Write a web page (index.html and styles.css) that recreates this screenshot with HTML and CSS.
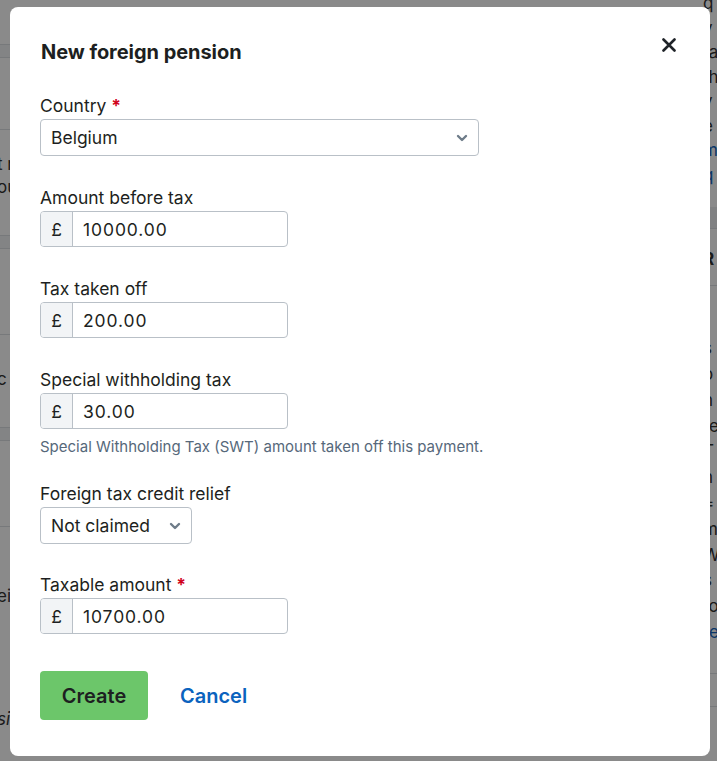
FILE: index.html
```html
<!DOCTYPE html>
<html lang="en">
<head>
<meta charset="utf-8">
<title>New foreign pension</title>
<link rel="stylesheet" href="styles.css">
</head>
<body>
<div class="page">
  <div class="side side-left">
    <div class="bg-row band"></div>
    <div class="bg-row tall1 line"></div>
    <div class="bg-text first">t r</div>
    <div class="bg-text">ou</div>
    <div class="bg-row band gap"></div>
    <div class="bg-row tall line"></div>
    <div class="bg-text spaced">c</div>
    <div class="bg-row band gap"></div>
    <div class="bg-row tall line"></div>
    <div class="bg-text spaced2">eig</div>
    <div class="bg-text spaced3 italic">si</div>
  </div>
  <div class="middle"></div>
  <div class="side side-right">
    <div class="bg-text r top">q</div>
    <div class="bg-text r">y</div>
    <div class="bg-text r">ta</div>
    <div class="bg-text r">th</div>
    <div class="bg-text r">y</div>
    <div class="bg-text r">e</div>
    <div class="bg-text r link">m</div>
    <div class="bg-text r link">q</div>
    <div class="bg-row band2"></div>
    <div class="bg-text r bold">R</div>
    <div class="bg-row line thin1"></div>
    <div class="bg-text r2 firstp">f</div>
    <div class="bg-text r2">s</div>
    <div class="bg-text r2">o</div>
    <div class="bg-text r2">n</div>
    <div class="bg-text r2">re</div>
    <div class="bg-text r2">T</div>
    <div class="bg-text r2">n</div>
    <div class="bg-text r2">=</div>
    <div class="bg-text r2">m</div>
    <div class="bg-text r2">W</div>
    <div class="bg-text r2">s</div>
    <div class="bg-text r2">to</div>
    <div class="bg-text r2 link">re</div>
    <div class="bg-row line thin2"></div>
    <div class="bg-row line thin3"></div>
  </div>
</div>
<div class="overlay"></div>

<div class="modal" role="dialog" aria-labelledby="modal-title">
  <div class="modal-header">
    <h2 id="modal-title" class="modal-title">New foreign pension</h2>
    <button class="close" type="button" aria-label="Close">
      <svg width="14" height="14" viewBox="0 0 14 14"><path d="M1.5 1.5 L12.5 12.5 M12.5 1.5 L1.5 12.5" stroke="#1f2328" stroke-width="2.6" stroke-linecap="round"/></svg>
    </button>
  </div>

  <form class="form">
    <div class="field">
      <label class="label">Country <span class="req">*</span></label>
      <div class="select select-wide">
        <span>Belgium</span>
        <svg class="chev" width="12" height="8" viewBox="0 0 12 8"><path d="M2 2 L6 6 L10 2" fill="none" stroke="#6e7c89" stroke-width="2.4" stroke-linecap="round" stroke-linejoin="round"/></svg>
      </div>
    </div>

    <div class="field">
      <label class="label">Amount before tax</label>
      <div class="input-group">
        <span class="addon">£</span>
        <span class="input">10000.00</span>
      </div>
    </div>

    <div class="field">
      <label class="label">Tax taken off</label>
      <div class="input-group">
        <span class="addon">£</span>
        <span class="input">200.00</span>
      </div>
    </div>

    <div class="field field-help">
      <label class="label">Special withholding tax</label>
      <div class="input-group">
        <span class="addon">£</span>
        <span class="input">30.00</span>
      </div>
      <p class="help">Special Withholding Tax (SWT) amount taken off this payment.</p>
    </div>

    <div class="field field-select">
      <label class="label">Foreign tax credit relief</label>
      <div class="select select-narrow">
        <span>Not claimed</span>
        <svg class="chev" width="12" height="8" viewBox="0 0 12 8"><path d="M2 2 L6 6 L10 2" fill="none" stroke="#6e7c89" stroke-width="2.4" stroke-linecap="round" stroke-linejoin="round"/></svg>
      </div>
    </div>

    <div class="field">
      <label class="label">Taxable amount <span class="req">*</span></label>
      <div class="input-group">
        <span class="addon">£</span>
        <span class="input">10700.00</span>
      </div>
    </div>

    <div class="actions">
      <button class="btn-create" type="button">Create</button>
      <a class="btn-cancel" href="#">Cancel</a>
    </div>
  </form>
</div>
</body>
</html>
```

FILE: styles.css
```css
* { box-sizing: border-box; }

html, body {
  margin: 0;
  height: 100%;
}

body {
  font-family: Inter, "Noto Sans", "Liberation Sans", sans-serif;
  color: #1d1f21;
  background: #ffffff;
  overflow: hidden;
}

/* background page (dimmed behind the dialog) */
.page {
  display: grid;
  grid-template-columns: 40px 1fr 8px;
  height: 761px;
  overflow: hidden;
}

.side {
  display: flex;
  flex-direction: column;
  overflow: hidden;
  font-size: 17px;
  color: #333;
}

.side-left { padding-top: 44px; }
.side-right { margin-left: -6px; }

.bg-row.band { height: 14px; flex: none; background: #f3f4f6; border-top: 1px solid #dcdfe3; border-bottom: 1px solid #dcdfe3; }
.bg-row.band2 { height: 22px; flex: none; background: #eceef1; border-bottom: 1px solid #dcdfe3; margin-top: 20px; }
.bg-row.tall1 { height: 72px; flex: none; }
.bg-row.tall { height: 86px; flex: none; }
.bg-row.line { border-bottom: 1px solid #dcdfe3; }
.bg-row.thin1 { height: 14px; flex: none; }
.bg-row.thin2 { height: 20px; flex: none; margin-top: 8px; }
.bg-row.thin3 { height: 33px; flex: none; }
.bg-row.gap { margin-top: 36px; }

.bg-text { line-height: 23px; white-space: nowrap; margin-left: -3px; flex: none; }
.bg-text.first { margin-top: 23px; }
.bg-text.r { line-height: 24.5px; margin-left: 0; }
.bg-text.r.top { margin-top: -9px; }
.bg-text.r2 { line-height: 25.8px; margin-left: 0; }
.bg-text.firstp { margin-top: 25px; }
.bg-text.link { color: #1565c0; }
.bg-text.bold { font-weight: 700; margin-top: 18px; }
.bg-text.spaced { margin-top: 33px; }
.bg-text.spaced2 { margin-top: 58px; }
.bg-text.spaced3 { margin-top: 100px; }
.bg-text.italic { font-style: italic; }

.overlay {
  position: fixed;
  inset: 0;
  background: rgba(0, 0, 0, 0.46);
}

/* dialog */
.modal {
  position: fixed;
  left: 10px;
  top: 7px;
  width: 700px;
  height: 749px;
  background: #ffffff;
  border-radius: 8px;
  padding: 31px 30px 30px 30px;
  display: flex;
  flex-direction: column;
}

.modal-header {
  display: flex;
  justify-content: space-between;
  align-items: center;
  height: 28px;
}

.modal-title {
  margin: 0;
  font-size: 20px;
  line-height: 28px;
  font-weight: 700;
  letter-spacing: -0.05px;
  color: #1d1f21;
  padding-left: 1px;
}

.close {
  border: 0;
  background: none;
  padding: 0;
  width: 14px;
  height: 14px;
  margin-right: 4px;
  margin-top: -15px;
  display: flex;
  cursor: pointer;
}

.form {
  display: flex;
  flex-direction: column;
  margin-top: 28px;
}

.field {
  display: flex;
  flex-direction: column;
  margin-bottom: 30px;
}

.field-help { margin-bottom: 25px; }
.field-select { margin-bottom: 29px; }

.label {
  font-size: 17.5px;
  line-height: 24px;
  margin-bottom: 1px;
  color: #1d1f21;
}

.req { color: #d0021b; font-weight: 700; }

.select {
  display: flex;
  align-items: center;
  justify-content: space-between;
  height: 37px;
  border: 1px solid #b9c0c7;
  border-radius: 4px;
  padding: 0 10px;
  font-size: 17.5px;
  background: #fff;
}

.select-wide { width: 439px; }
.select-narrow { width: 152px; }

.chev { flex: none; margin-top: 1px; }

.input-group {
  display: flex;
  width: 248px;
  height: 36px;
  border: 1px solid #b9c0c7;
  border-radius: 4px;
  overflow: hidden;
  font-size: 17.5px;
}

.addon {
  width: 32px;
  flex: none;
  display: flex;
  align-items: center;
  justify-content: center;
  background: #f2f4f6;
  border-right: 1px solid #b9c0c7;
}

.input {
  display: flex;
  align-items: center;
  padding-left: 10px;
  flex: 1;
  letter-spacing: 0.9px;
}

.help {
  margin: 8px 0 0 0;
  font-size: 15px;
  line-height: 20px;
  color: #56687a;
}

.actions {
  display: flex;
  align-items: center;
  gap: 32px;
  margin-top: 7px;
}

.btn-create {
  font-family: inherit;
  height: 49px;
  width: 108px;
  border: 0;
  border-radius: 4px;
  background: #6cc66a;
  color: #1d1f21;
  font-size: 20px;
  font-weight: 600;
}

.btn-cancel {
  font-size: 20px;
  font-weight: 600;
  color: #0b63be;
  text-decoration: none;
}
```
